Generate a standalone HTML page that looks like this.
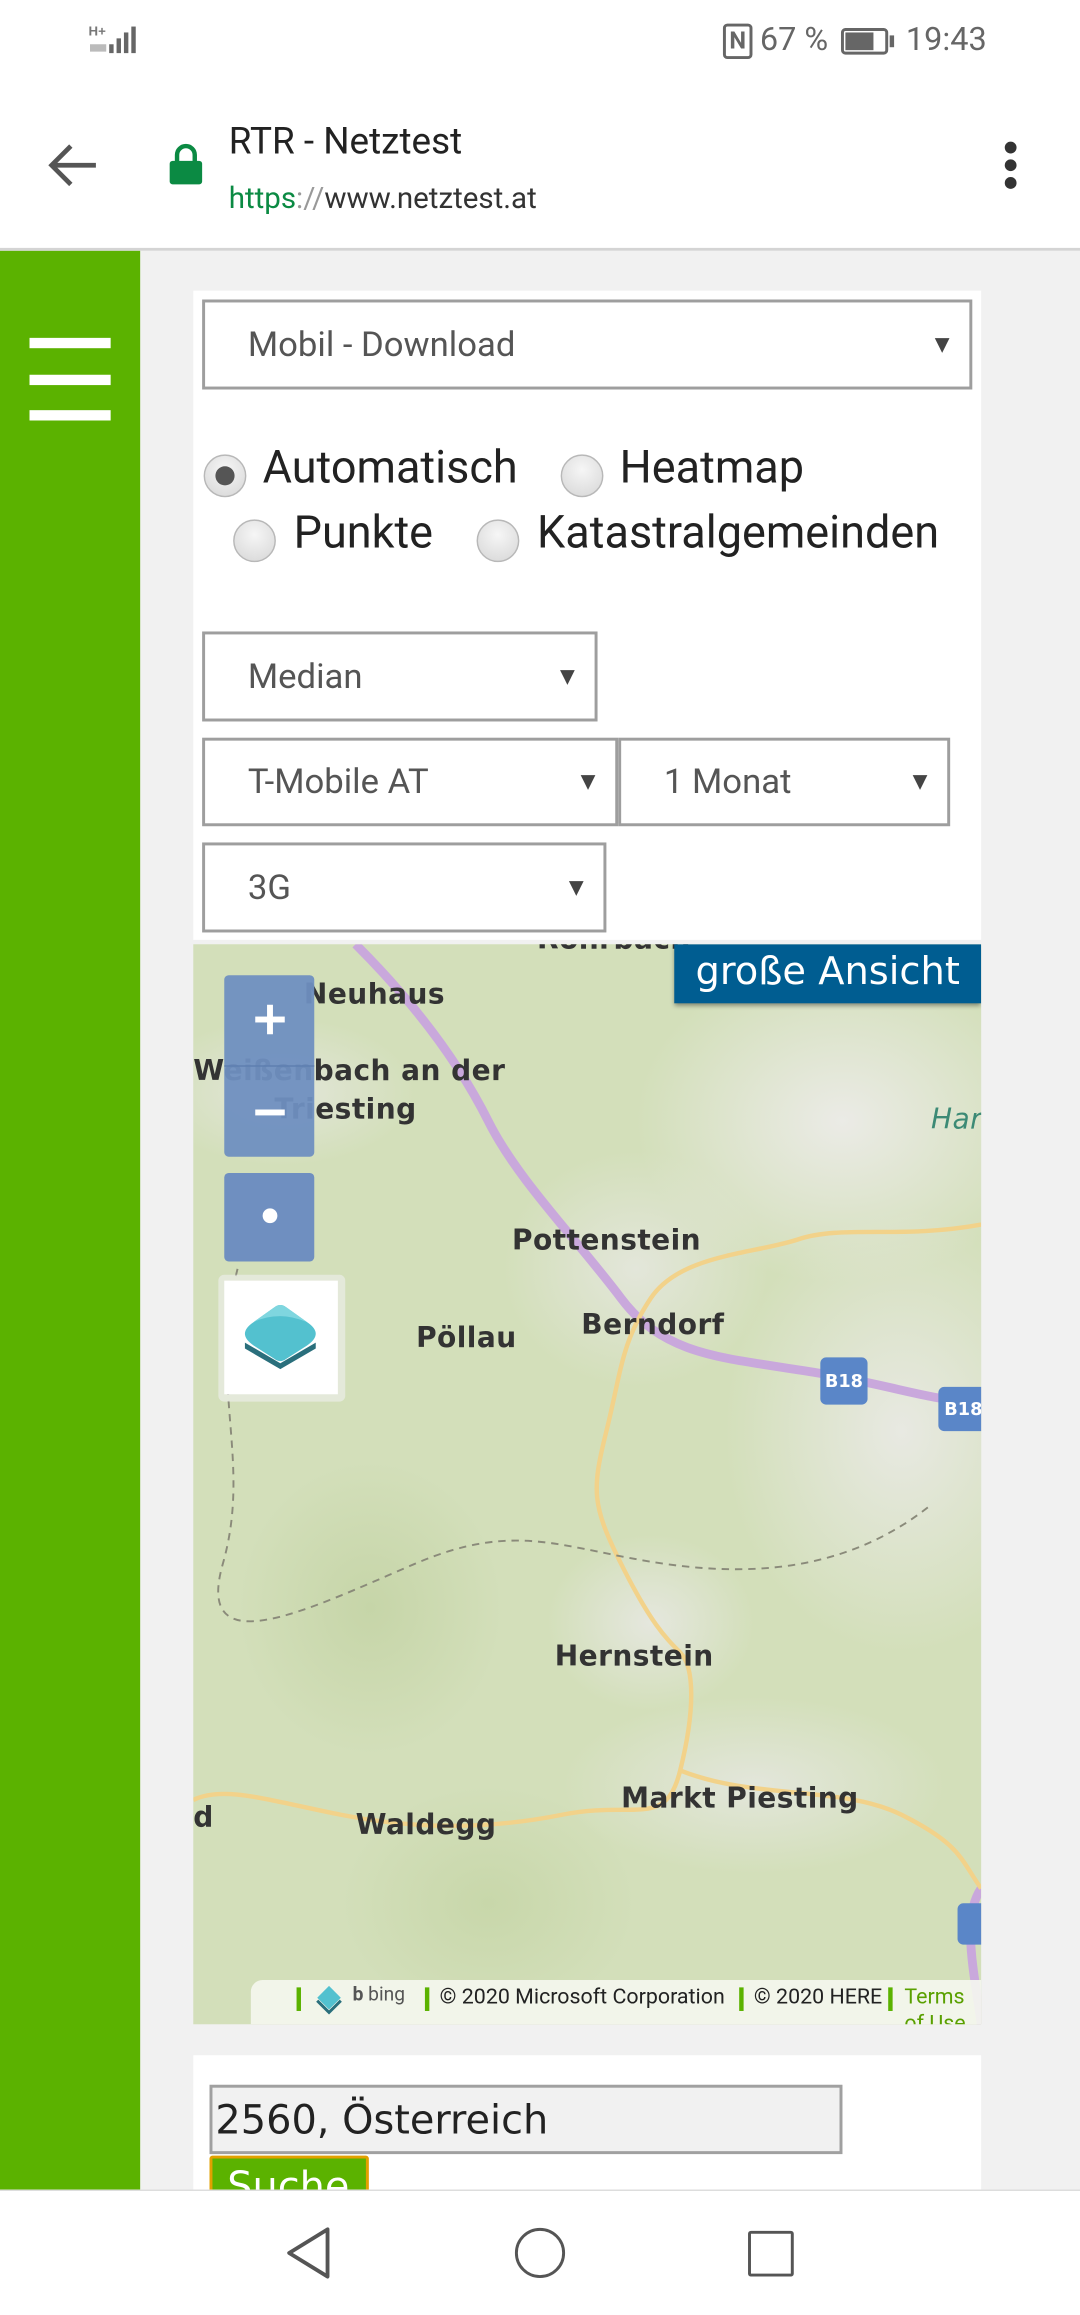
<!DOCTYPE html>
<html><head><meta charset="utf-8">
<style>
html,body{margin:0;padding:0;width:1080px;height:2312px;overflow:hidden;background:#fff;}
#w{position:absolute;left:0;top:0;width:732px;height:1568px;transform:scale(1.47541);transform-origin:0 0;font-family:"Roboto","Liberation Sans",sans-serif;}
.a{position:absolute;}
.sel{position:absolute;border:2px solid #9e9e9e;background:#fff;box-sizing:border-box;color:#555;font-size:23.5px;}
.sel span{position:absolute;left:29px;top:50%;transform:translateY(-52%);}
.sel i{position:absolute;right:10px;top:50%;transform:translateY(-50%);font-style:normal;font-size:17px;color:#444;}
.rad{position:absolute;width:29px;height:29px;border-radius:50%;background:radial-gradient(circle at 50% 35%,#f6f6f6,#d6d6d6);border:1px solid #b8b8b8;box-sizing:border-box;}
.rl{position:absolute;font-size:30.5px;color:#222;}
.lbl{position:absolute;font-family:"DejaVu Sans",sans-serif;font-weight:bold;font-size:19px;color:#333;letter-spacing:0.3px;}
</style></head><body><div id="w">
<svg class="a" style="left:60px;top:15px" width="36" height="24" viewBox="0 0 36 24"><text x="0" y="9" font-size="9" font-family="Liberation Sans" fill="#777" font-weight="bold">H+</text><rect x="14" y="15" width="3" height="6" fill="#666"/><rect x="19" y="11" width="3" height="10" fill="#666"/><rect x="24" y="7" width="3" height="14" fill="#666"/><rect x="29" y="3" width="3" height="18" fill="#666"/><rect x="1" y="15" width="11" height="5" fill="#bbb"/></svg>
<div class="a" style="left:490px;top:16px;width:20px;height:24px;border:2px solid #666;border-radius:3px;box-sizing:border-box;font-size:16px;font-weight:bold;color:#666;text-align:center;line-height:20px;">N</div>
<div class="a" style="left:515px;top:15px;font-size:22px;color:#666;">67 %</div>
<div class="a" style="left:570px;top:19px;width:32px;height:18px;border:2px solid #666;border-radius:3px;box-sizing:border-box;"><div style="position:absolute;left:1px;top:1px;width:19px;height:12px;background:#666"></div></div>
<div class="a" style="left:603px;top:24px;width:3px;height:8px;background:#666"></div>
<div class="a" style="left:614px;top:15px;font-size:22px;color:#666;">19:43</div>
<svg class="a" style="left:30px;top:96px" width="38" height="32" viewBox="0 0 38 32"><path d="M35 16H5M18 3L5 16l13 13" stroke="#555" stroke-width="3.2" fill="none"/></svg>
<svg class="a" style="left:114px;top:96px" width="24" height="30" viewBox="0 0 24 30"><path d="M6 14V9a6 6 0 0 1 12 0v5" stroke="#0b8a43" stroke-width="3" fill="none"/><rect x="1" y="13" width="22" height="16" rx="2" fill="#0b8a43"/></svg>
<div class="a" style="left:155px;top:82px;font-size:25px;color:#222;">RTR - Netztest</div>
<div class="a" style="left:155px;top:122px;font-size:20px;color:#333;"><span style="color:#0b8a43">https</span><span style="color:#999">://</span>www.netztest.at</div>
<div class="a" style="left:681px;top:96px;width:8px;height:8px;border-radius:50%;background:#333"></div>
<div class="a" style="left:681px;top:108px;width:8px;height:8px;border-radius:50%;background:#333"></div>
<div class="a" style="left:681px;top:120px;width:8px;height:8px;border-radius:50%;background:#333"></div>
<div class="a" style="left:0;top:168px;width:732px;height:2px;background:#d4d4d4"></div>
<div class="a" style="left:0;top:170px;width:732px;height:1314px;background:#f1f1f1"></div>
<div class="a" style="left:0;top:170px;width:95px;height:1314px;background:#5bb200"></div>
<div class="a" style="left:20px;top:229px;width:55px;height:7px;background:#fff"></div>
<div class="a" style="left:20px;top:254px;width:55px;height:7px;background:#fff"></div>
<div class="a" style="left:20px;top:278px;width:55px;height:7px;background:#fff"></div>
<div class="a" style="left:131px;top:197px;width:534px;height:440px;background:#fff"></div>
<div class="sel" style="left:137px;top:203px;width:522px;height:61px"><span>Mobil - Download</span><i>▼</i></div>
<div class="rad" style="left:138px;top:308px"><div style="position:absolute;left:7px;top:7px;width:13px;height:13px;border-radius:50%;background:#555"></div></div>
<div class="rl" style="left:178px;top:300px">Automatisch</div>
<div class="rad" style="left:380px;top:308px"></div>
<div class="rl" style="left:420px;top:300px">Heatmap</div>
<div class="rad" style="left:158px;top:352px"></div>
<div class="rl" style="left:199px;top:344px">Punkte</div>
<div class="rad" style="left:323px;top:352px"></div>
<div class="rl" style="left:364px;top:344px">Katastralgemeinden</div>
<div class="sel" style="left:137px;top:428px;width:268px;height:61px"><span>Median</span><i>▼</i></div>
<div class="sel" style="left:137px;top:500px;width:282px;height:60px"><span>T-Mobile AT</span><i>▼</i></div>
<div class="sel" style="left:419px;top:500px;width:225px;height:60px"><span>1 Monat</span><i>▼</i></div>
<div class="sel" style="left:137px;top:571px;width:274px;height:61px"><span>3G</span><i>▼</i></div>
<div class="a" style="left:131px;top:640px;width:534px;height:732px;overflow:hidden;background:#d3dfba;">
<div class="a" style="left:0;top:0;width:534px;height:732px;background:radial-gradient(ellipse 140px 110px at 440px 120px,#ebebe6,transparent),radial-gradient(ellipse 120px 150px at 480px 330px,#e8e9e2,transparent),radial-gradient(ellipse 90px 80px at 300px 220px,#e3e6da,transparent),radial-gradient(ellipse 70px 60px at 310px 460px,#e5e7de,transparent),radial-gradient(ellipse 130px 60px at 380px 570px,#e3e6db,transparent),radial-gradient(ellipse 90px 50px at 60px 100px,#e3e6da,transparent),radial-gradient(ellipse 90px 100px at 120px 450px,#c6d5a8,transparent),radial-gradient(ellipse 100px 80px at 200px 650px,#c8d7aa,transparent)"></div>
<svg class="a" style="left:0;top:0" width="534" height="732" viewBox="0 0 534 732">
<path d="M110 0 C150 40 180 80 200 120 S260 200 290 240 S360 280 420 290 S500 310 534 310" stroke="#c9a8dc" stroke-width="6" fill="none"/>
<path d="M534 640 C520 660 530 700 534 732" stroke="#c9a8dc" stroke-width="6" fill="none"/>
<path d="M534 190 C480 200 440 190 410 200 S330 210 310 240 S290 290 280 330 S270 380 290 420 S320 470 330 480 S340 520 330 560 S300 580 250 590 S150 600 100 590 S20 570 0 580" stroke="#f2d28a" stroke-width="3" fill="none"/>
<path d="M330 560 C380 580 440 570 480 590 S520 620 534 640" stroke="#f2d28a" stroke-width="3" fill="none"/>
<path d="M30 220 C10 300 40 350 20 420 S80 450 150 420 S250 410 320 420 S450 420 500 380" stroke="#8a8a7a" stroke-width="1.3" stroke-dasharray="5 4" fill="none"/>
</svg>
<div class="lbl" style="left:233px;top:-14px">Rohrbach</div>
<div class="lbl" style="left:75px;top:23px">Neuhaus</div>
<div class="lbl" style="left:0;top:75px">Weißenbach an der</div>
<div class="lbl" style="left:55px;top:101px">Triesting</div>
<div class="lbl" style="left:216px;top:190px">Pottenstein</div>
<div class="lbl" style="left:151px;top:256px">Pöllau</div>
<div class="lbl" style="left:263px;top:247px">Berndorf</div>
<div class="lbl" style="left:245px;top:472px">Hernstein</div>
<div class="lbl" style="left:290px;top:568px">Markt Piesting</div>
<div class="lbl" style="left:110px;top:586px">Waldegg</div>
<div class="lbl" style="left:0px;top:581px">d</div>
<div class="lbl" style="left:500px;top:108px;font-style:italic;color:#3c8a75;font-weight:normal">Har</div>
<div class="a" style="left:425px;top:280px;width:32px;height:32px;background:#5a86c8;border-radius:4px;color:#fff;font-size:12px;font-weight:bold;text-align:center;line-height:32px;font-family:'DejaVu Sans'">B18</div>
<div class="a" style="left:505px;top:300px;width:32px;height:30px;background:#5a86c8;border-radius:4px;color:#fff;font-size:12px;font-weight:bold;line-height:30px;padding-left:4px;font-family:'DejaVu Sans'">B18</div>
<div class="a" style="left:518px;top:650px;width:20px;height:28px;background:#5a86c8;border-radius:4px"></div>
<div class="a" style="left:21px;top:21px;width:61px;height:123px;background:#6f8fc0;border-radius:3px;opacity:.95"></div>
<div class="a" style="left:21px;top:82px;width:61px;height:1px;background:#5e7fb0"></div>
<div class="a" style="left:42px;top:49px;width:20px;height:4px;background:#fff"></div>
<div class="a" style="left:50px;top:41px;width:4px;height:20px;background:#fff"></div>
<div class="a" style="left:42px;top:112px;width:20px;height:4px;background:#fff"></div>
<div class="a" style="left:21px;top:155px;width:61px;height:60px;background:#6f8fc0;border-radius:3px"></div>
<div class="a" style="left:47px;top:179px;width:10px;height:10px;border-radius:50%;background:#fff"></div>
<div class="a" style="left:17px;top:224px;width:86px;height:86px;background:rgba(240,240,240,.6);border-radius:4px"></div>
<div class="a" style="left:21px;top:228px;width:77px;height:77px;background:#fff"></div>
<svg class="a" style="left:31px;top:240px" width="56" height="52" viewBox="0 0 56 52"><path d="M4 30 L28 44 L52 30 L52 34 L28 48 L4 34Z" fill="#2a6f7c"/><path d="M4 24 Q4 20 10 16 L24 6 Q28 3 32 6 L46 16 Q52 20 52 24 Q52 28 46 32 L32 41 Q28 44 24 41 L10 32 Q4 28 4 24Z" fill="#53c1cf"/><path d="M10 16 L24 6 Q28 3 32 6 L46 16 Q36 12 28 12 Q18 12 10 16Z" fill="#7fd6df"/></svg>
<div class="a" style="left:326px;top:0;width:208px;height:40px;background:#005d91;box-shadow:0 2px 3px rgba(0,0,0,.4);color:#fff;font-size:26px;line-height:38px;text-align:center;font-family:'DejaVu Sans',sans-serif;">große Ansicht</div>
<div class="a" style="left:39px;top:702px;width:495px;height:30px;background:rgba(245,247,240,.9);border-radius:8px 0 0 0"></div>
<div class="a" style="left:70px;top:707px;width:3px;height:16px;background:#5bb200"></div>
<svg class="a" style="left:82px;top:704px" width="20" height="22" viewBox="0 0 20 22"><path d="M10 2 L18 10 L10 18 L2 10Z" fill="#53c1cf"/><path d="M2 12 L10 20 L18 12" stroke="#2a6f7c" stroke-width="2" fill="none"/></svg>
<div class="a" style="left:108px;top:705px;font-size:13px;color:#555;"><b>b</b> bing</div>
<div class="a" style="left:157px;top:707px;width:3px;height:16px;background:#5bb200"></div>
<div class="a" style="left:167px;top:705px;font-size:14.5px;color:#222;">© 2020 Microsoft Corporation</div>
<div class="a" style="left:370px;top:707px;width:3px;height:16px;background:#5bb200"></div>
<div class="a" style="left:380px;top:705px;font-size:14.5px;color:#222;">© 2020 HERE</div>
<div class="a" style="left:471px;top:707px;width:3px;height:16px;background:#5bb200"></div>
<div class="a" style="left:482px;top:705px;font-size:14.5px;color:#5aa000;line-height:18px">Terms<br>of Use</div>
</div>
<div class="a" style="left:131px;top:1393px;width:534px;height:91px;background:#fff;overflow:hidden">
<div class="a" style="left:11px;top:20px;width:429px;height:47px;background:#f1f1f1;border:2px solid #a0a0a0;box-sizing:border-box;font-family:'DejaVu Sans',sans-serif;font-size:27px;color:#222;line-height:45px;padding-left:2px">2560, Österreich</div>
<div class="a" style="left:11px;top:68px;width:108px;height:40px;background:#5bb200;border:2px solid #e2a000;box-sizing:border-box;border-radius:2px;color:#fff;font-family:'DejaVu Sans',sans-serif;font-size:27px;padding-left:10px;line-height:40px">Suche</div>
</div>
<div class="a" style="left:0;top:1484px;width:732px;height:84px;background:#fff;border-top:1px solid #ddd"></div>
<svg class="a" style="left:190px;top:1507px" width="40" height="40" viewBox="0 0 40 40"><path d="M32 4 L6 20 L32 36Z" stroke="#555" stroke-width="2.6" fill="none" stroke-linejoin="round"/></svg>
<div class="a" style="left:349px;top:1510px;width:30px;height:30px;border:2.6px solid #555;border-radius:50%"></div>
<div class="a" style="left:507px;top:1512px;width:27px;height:27px;border:2.6px solid #555;border-radius:2px"></div>
</div></body></html>
